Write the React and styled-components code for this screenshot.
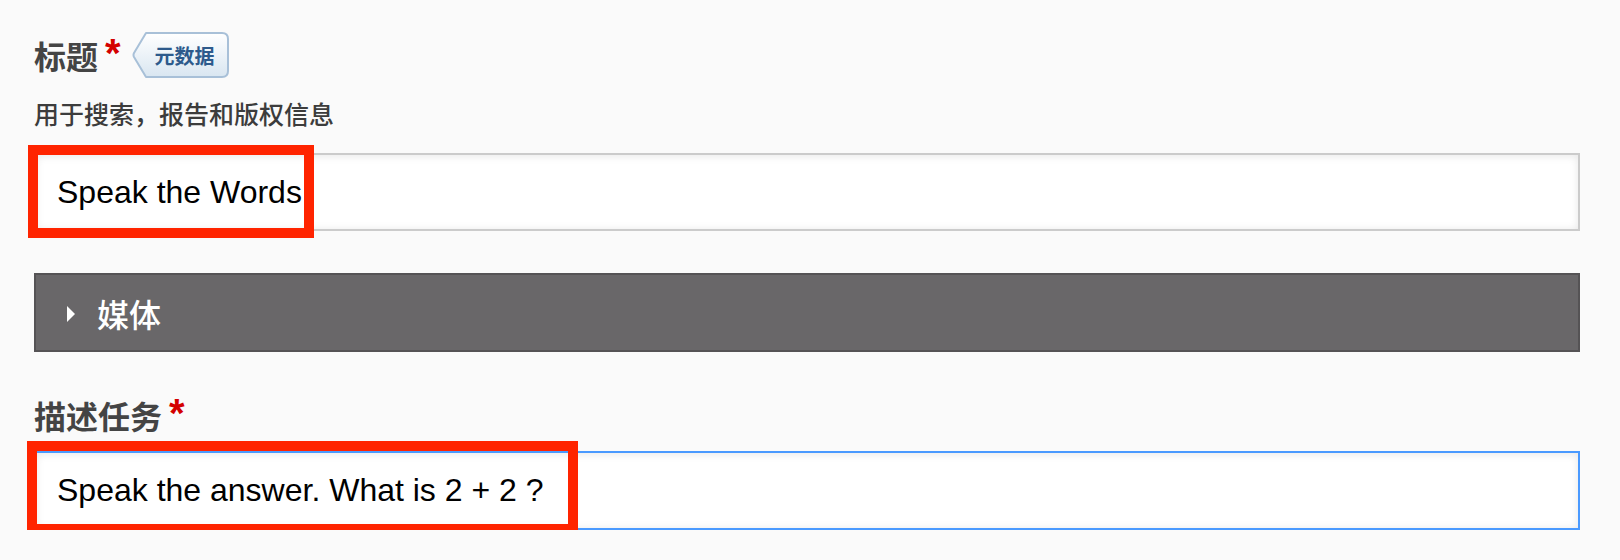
import React from 'react';
import styled, { createGlobalStyle } from 'styled-components';

const GlobalStyle = createGlobalStyle`
  html, body {
    margin: 0;
    padding: 0;
    background: #fafafa;
  }
  body {
    font-family: "Noto Sans CJK SC", "Liberation Sans", sans-serif;
  }
`;

const Page = styled.div`
  width: 1546px;
  padding: 32px 0 0 34px;
  display: flex;
  flex-direction: column;
`;

const LabelRow = styled.div`
  display: flex;
  align-items: center;
  height: 46px;
`;

const Label = styled.div`
  display: flex;
  align-items: flex-start;
  margin-top: ${({ $top }) => $top || 0}px;
`;

const LabelText = styled.span`
  font-family: "Noto Sans CJK SC", sans-serif;
  font-size: 32px;
  line-height: 40px;
  font-weight: 700;
  color: #444;
`;

const Required = styled.span`
  font-family: "Liberation Sans", Arial, sans-serif;
  font-size: 40px;
  line-height: 40px;
  font-weight: 700;
  color: #d40000;
  margin-left: 7px;
  margin-top: -2px;
`;

const MetaBadge = styled.span`
  position: relative;
  display: inline-flex;
  align-items: center;
  box-sizing: border-box;
  width: 97px;
  height: 46px;
  margin-left: 11px;
  padding-left: 23px;

  svg {
    position: absolute;
    left: 0;
    top: 0;
  }
`;

const MetaText = styled.span`
  position: relative;
  font-family: "Noto Sans CJK SC", sans-serif;
  font-size: 20px;
  font-weight: 700;
  color: #2d5a8c;
`;

const Description = styled.div`
  margin-top: 20px;
  font-family: "Noto Sans CJK SC", sans-serif;
  font-size: 25px;
  line-height: 30px;
  font-weight: 500;
  color: #3c3c3c;
`;

const FieldWrap = styled.div`
  position: relative;
  margin-top: ${({ $top }) => $top}px;
`;

const TextInput = styled.div`
  box-sizing: border-box;
  height: ${({ $height }) => $height}px;
  display: flex;
  align-items: center;
  padding-left: 21px;
  background: #fff;
  border: 2px solid ${({ $focused }) => ($focused ? '#4a9aff' : '#cbcbcb')};
  box-shadow: inset 0 1px 8px rgba(0, 0, 0, 0.1);
  font-family: "Liberation Sans", Arial, sans-serif;
  font-size: 32px;
  color: #000;
`;

const Highlight = styled.div`
  position: absolute;
  box-sizing: border-box;
  border: 10px solid #ff2400;
  pointer-events: none;
`;

const MediaBar = styled.div`
  box-sizing: border-box;
  margin-top: 42px;
  height: 79px;
  display: flex;
  align-items: center;
  padding-left: 31px;
  background: #696769;
  border: 2px solid #555355;
`;

const Caret = styled.span`
  width: 0;
  height: 0;
  border-top: 8px solid transparent;
  border-bottom: 8px solid transparent;
  border-left: 8px solid #fff;
  margin-right: 22px;
  margin-top: 3px;
`;

const MediaTitle = styled.span`
  font-family: "Noto Sans CJK SC", sans-serif;
  font-size: 32px;
  font-weight: 500;
  color: #fff;
`;

const BadgeShape = () => (
  <svg width="97" height="46" viewBox="0 0 97 46">
    <defs>
      <linearGradient id="metaGrad" x1="0" y1="0" x2="0" y2="1">
        <stop offset="0" stopColor="#ffffff" />
        <stop offset="1" stopColor="#d9e6f1" />
      </linearGradient>
    </defs>
    <path
      d="M14 1 H90 Q96 1 96 7 V39 Q96 45 90 45 H14 L2 25 Q1 23 2 21 Z"
      fill="url(#metaGrad)"
      stroke="#a8c0d8"
      strokeWidth="2"
      strokeLinejoin="round"
    />
  </svg>
);

export default function App() {
  return (
    <>
      <GlobalStyle />
      <Page>
        <LabelRow>
          <Label>
            <LabelText>标题</LabelText>
            <Required>*</Required>
          </Label>
          <MetaBadge>
            <BadgeShape />
            <MetaText>元数据</MetaText>
          </MetaBadge>
        </LabelRow>
        <Description>用于搜索，报告和版权信息</Description>

        <FieldWrap $top={25}>
          <TextInput $height={78}>Speak the Words</TextInput>
          <Highlight style={{ left: -6, top: -8, width: 286, height: 93 }} />
        </FieldWrap>

        <MediaBar>
          <Caret />
          <MediaTitle>媒体</MediaTitle>
        </MediaBar>

        <Label $top={43}>
          <LabelText>描述任务</LabelText>
          <Required>*</Required>
        </Label>

        <FieldWrap $top={16}>
          <TextInput $height={79} $focused>
            Speak the answer. What is 2 + 2 ?
          </TextInput>
          <Highlight style={{ left: -7, top: -10, width: 551, height: 93 }} />
        </FieldWrap>
      </Page>
    </>
  );
}
